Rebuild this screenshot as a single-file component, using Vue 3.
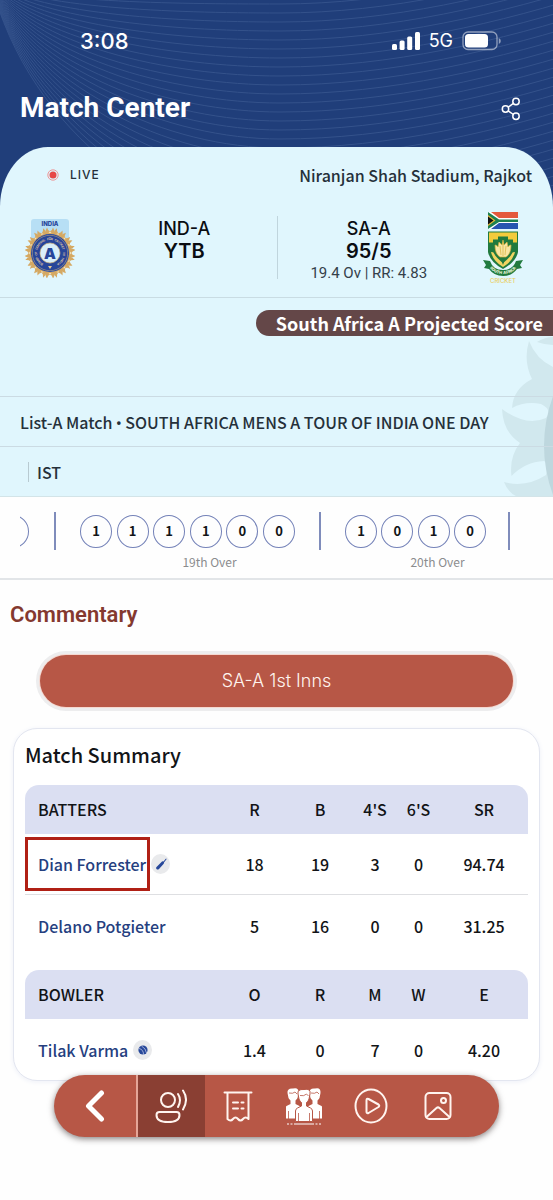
<template>
<div class="page">
    <div class="hero">
        <svg class="waves" viewBox="0 0 553 300" preserveAspectRatio="xMidYMin slice" aria-hidden="true">
            <path v-for="d in waves" :key="d" :d="d" />
        </svg>

        <header>
            <div class="status">
                <span class="time">3:08</span>
                <div class="status_right">
                    <svg width="28" height="19" viewBox="0 0 28 19" fill="#fff">
                        <rect x="0" y="12" width="5" height="6" rx="1.5" />
                        <rect x="7.6" y="8.5" width="5" height="9.500" rx="1.5" />
                        <rect x="15.2" y="4.500" width="5" height="13.500" rx="1.5" />
                        <rect x="23" y="0" width="5" height="18" rx="1.5" />
                    </svg>
                    <span class="network">5G</span>
                    <svg width="40" height="20" viewBox="0 0 40 20">
                        <rect x="1" y="1" width="34" height="17.500" rx="5" fill="none" stroke="#fff" stroke-opacity=".5" stroke-width="1.300" />
                        <rect x="3" y="3" width="23" height="13.500" rx="3.500" fill="#fff" />
                        <path d="M36.800 7v6q2-1 2-3t-2-3z" fill="#fff" fill-opacity=".5" />
                    </svg>
                </div>
            </div>
            <div class="title_row">
                <h1>Match Center</h1>
                <button class="share" type="button" aria-label="Share">
                    <svg width="20" height="24" viewBox="0 0 20 24" fill="none" stroke="#fff" stroke-width="1.500">
                        <circle cx="4.500" cy="12" r="3.200" />
                        <circle cx="15" cy="4.500" r="3.200" />
                        <circle cx="15" cy="19.300" r="3.200" />
                        <path d="M7.200 10.200l5.200-3.800M7.200 13.900l5.200 3.600" />
                    </svg>
                </button>
            </div>
        </header>

        <section class="match">
            <svg class="watermark" width="54" height="160" viewBox="499 338 54 160" aria-hidden="true">
                <path fill="#d1e8ee" d="M529 342Q536 360 553 368V500H524Q509 497 504 483Q526 489 546 476Q549 464 544 462Q525 463 511.500 477Q509 458 520 444Q503 433 502 410Q526 428 546 419Q553 411 541 405Q525 402 512 409Q513 390 532 380Q523 362 529 342zM537 343Q545 338 553 338V346Q545 346 537 343z" />
                <path fill="#bed7de" d="M553 397Q535 447 553 496z" />
            </svg>

            <div class="venue">
                <span class="live">
                    <svg width="12" height="12" viewBox="0 0 12 12"><circle cx="6" cy="6" r="5.200" fill="none" stroke="#ef7f7f" stroke-width=".8" /><circle cx="6" cy="6" r="3.500" fill="#e64646" /></svg>
                    LIVE
                </span>
                <span>Niranjan Shah Stadium, Rajkot</span>
            </div>

            <div class="score">
                <div class="logo">
                    <svg width="50" height="60" viewBox="0 0 50 60">
                        <rect x="6" y="1" width="38" height="34" rx="3" fill="#b7dff5" />
                        <text x="25" y="8" class="india">INDIA</text>
                        <g v-for="n in 16" :key="n" :transform="`rotate(${n * 22.5} 25 35)`">
                            <path d="M20.500 16.500Q20 12 22 9.500Q23 13 25 13.500Q27 13 28 9.500Q30 12 29.500 16.500z" fill="#d5a963" />
                            <path d="M23.500 15l1.500-1.500 1.500 1.500z" fill="#f3e4c0" />
                        </g>
                        <circle cx="25" cy="35" r="19" fill="#27459a" />
                        <circle cx="25" cy="35" r="17.700" fill="none" stroke="#d5b77c" stroke-width=".5" />
                        <circle cx="25" cy="35" r="10" fill="#d9eefa" stroke="#d5b77c" stroke-width=".7" />
                        <text v-for="(c, i) in motto" :key="i" x="25" y="22" class="ring_text" :transform="`rotate(${i * 8 - 144} 25 35)`">{{ c }}</text>
                        <path d="M23 48h4l-2 3z" fill="#e7c791" />
                        <text x="25" y="40.500" class="india_a">A</text>
                    </svg>
                </div>
                <div class="team">
                    <span class="team_name">IND-A</span>
                    <strong>YTB</strong>
                </div>
                <div class="team away">
                    <span class="team_name">SA-A</span>
                    <strong>95/5</strong>
                    <span class="overs_rate">19.4 Ov | RR: 4.83</span>
                </div>
                <div class="logo">
                    <svg width="42" height="74" viewBox="0 0 42 74">
                        <path d="M6 1h30v17H6z" fill="#fff" />
                        <path d="M6 1h30v6H17L9 1z" fill="#e4593d" />
                        <path d="M6 18h30v-6H17L9 18z" fill="#2754b0" />
                        <path d="M6 1l11 7.500h19v2.500H17L6 18v-4l6-4.500L6 5z" fill="#1d8050" />
                        <path d="M6 4l7.500 5.500L6 15z" fill="#e5b735" />
                        <path d="M6 5.500l5.500 4L6 13.500z" fill="#111" />
                        <path d="M6 20.500h30V41Q34 51 21 58Q8 51 6 41z" fill="#217a3e" />
                        <path d="M7 21.500h28v10h-4v-3h-5v-3H16v3h-5v3H7z" fill="#f3cb3c" />
                        <path d="M9 41q8 0 12 13 4-13 12-13-2 9-12 15Q11 50 9 41z" fill="#f0d461" />
                        <path d="M11 40q6 1 10 9 4-8 10-9-1 5-10 12-9-7-10-12z" fill="#217a3e" />
                        <path d="M13 34q2 0 3 2l1-5 3 3 1-5 1 5 3-3 1 5q1-2 3-2 0 9-5 12h-6q-5-3-5-12z" fill="#f8e6a4" stroke="#d8b33e" stroke-width=".7" />
                        <path d="M18 35l1 9M21 31v14M24 35l-1 9" stroke="#d8b33e" stroke-width=".7" />
                        <path d="M1 49l7 1q3 9 13 9t13-9l7-1-3 5 2 3-5 1q-5 7-14 7T7 58l-5-1 2-3z" fill="#217a3e" />
                        <path id="ribbon" d="M7.500 56Q11 63 21 63t13.500-7" fill="none" />
                        <text class="ribbon_text"><textPath href="#ribbon" startOffset="50%">SOUTH AFRICA</textPath></text>
                        <text x="21" y="72" class="cricket">CRICKET</text>
                    </svg>
                </div>
            </div>

            <div class="projected"><span>South Africa A Projected Score</span></div>
            <div class="line">List-A Match <i>•</i> SOUTH AFRICA MENS A TOUR OF INDIA ONE DAY</div>
            <div class="line zone"><span>IST</span></div>
        </section>
    </div>

    <section class="overs">
        <div class="tail"><span class="ball"></span></div>
        <div v-for="over in overs" :key="over.label" class="over">
            <div class="balls">
                <span v-for="(ball, i) in over.balls" :key="i" class="ball">{{ ball }}</span>
            </div>
            <small>{{ over.label }}</small>
        </div>
    </section>

    <h2>Commentary</h2>
    <button class="innings" type="button">SA-A 1st Inns</button>

    <section class="summary">
        <h3>Match Summary</h3>
        <table v-for="table in tables" :key="table.head[0]">
            <colgroup><col><col class="c_r"><col class="c_b"><col class="c_4"><col class="c_6"><col class="c_sr"></colgroup>
            <thead>
                <tr><th v-for="h in table.head" :key="h" scope="col">{{ h }}</th></tr>
            </thead>
            <tbody>
                <tr v-for="row in table.rows" :key="row.name">
                    <td>
                        <div class="player">
                            <a href="#" :class="{ marked: row.marked }">{{ row.name }}</a>
                            <span v-if="row.icon" class="badge">
                                <svg v-if="row.icon === 'bat'" width="12" height="12" viewBox="0 0 12 12"><path d="M1.500 9L7 3.500Q8 3 8.500 3.500L11 .5l.7.6L9 4.500Q9.200 5.300 8.500 6L4 11Q2.500 12 1.500 11T1.500 9z" fill="#27489a" /></svg>
                                <svg v-else width="10" height="10" viewBox="0 0 10 10"><circle cx="5" cy="5" r="4.600" fill="#27489a" /><path d="M1 3.500Q5.500 4.500 5.500 9.500M3.500 1Q8 3.500 8.500 8" fill="none" stroke="#eef" stroke-width=".6" /></svg>
                            </span>
                        </div>
                    </td>
                    <td v-for="(v, i) in row.values" :key="i">{{ v }}</td>
                </tr>
            </tbody>
        </table>
    </section>

    <nav>
        <button class="back" type="button" aria-label="Back">
            <svg width="20" height="32" viewBox="0 0 20 32"><path d="M16.500 3L3.500 16l13 13" fill="none" stroke="#fff" stroke-width="5" stroke-linecap="round" stroke-linejoin="round" /></svg>
        </button>
        <button class="active" type="button" aria-label="Commentary">
            <svg width="32" height="36" viewBox="0 0 32 36" class="stroke">
                <circle cx="13" cy="12" r="7" />
                <path d="M4.500 24h17q3 0 3 3 0 7-11.500 7T1.500 27q0-3 3-3zM23 6q4 6 0 13M28 2.500q6 9 0 19" />
            </svg>
        </button>
        <button type="button" aria-label="Scorecard">
            <svg width="30" height="32" viewBox="0 0 30 32" class="stroke">
                <path d="M1.500 2.500h27M4.500 3v26q3 3 5.500 0 2.500-3 5 0 2.500 3 5 0 2.500-3 5.500 0V3M10 12.500h5M18.500 12.500h2M10 18.500h5M18.500 18.500h2" />
            </svg>
        </button>
        <button type="button" aria-label="Squads">
            <svg width="36" height="38" viewBox="0 0 36 38">
                <g v-for="x in [7, 29]" :key="x" :transform="`translate(${x} 0)`">
                    <path d="M-5.500 6Q-6 1 0 1.500Q6 0 5.500 6L4.500 11Q3 14 0 14T-4.500 11z" fill="#fff" />
                    <path d="M-4 6q4 1 6-1l2 2" fill="none" stroke="#b75746" stroke-width=".8" />
                    <path d="M-2.500 13h5v4l4 2q1 1 1 3v9.500h-15V22q0-2 1-3l4-2z" fill="#fff" />
                    <path d="M-4.500 24v8M4.500 24v8" stroke="#b75746" stroke-width=".8" />
                </g>
                <path d="M12 7Q11 2 18 2.500 25 1 24 7l-1 5q-1 3-2.500 3.500V19l4 2q2 1 2 3v10.500h-17V24q0-2 2-3l4-2v-3.500Q14 15 13 12z" fill="#fff" stroke="#b75746" stroke-width="1" />
                <path d="M14 8.500q4 1 6.500-1.500l2 2M12.500 26v8M23.500 26v8" fill="none" stroke="#b75746" stroke-width=".8" />
                <path d="M1 37h2M4.500 37h2M8 37h20M29.500 37h2M33 37h2" stroke="#fff" stroke-width="1" />
            </svg>
        </button>
        <button type="button" aria-label="Videos">
            <svg width="34" height="36" viewBox="0 0 34 36" class="stroke">
                <ellipse cx="17" cy="18" rx="15.500" ry="16.500" />
                <path d="M12.500 12.500q0-2.500 2-1.500l10 5.500q1.500 1.200 0 2.500l-10 6q-2 .8-2-1.500z" />
            </svg>
        </button>
        <button type="button" aria-label="Photos">
            <svg width="28" height="30" viewBox="0 0 28 30" class="stroke">
                <rect x="1.500" y="2" width="25" height="26" rx="4" />
                <circle cx="19.500" cy="9.500" r="2.500" />
                <path d="M2.500 26l10-9q1.500-1.300 3 0l10 9" />
            </svg>
        </button>
    </nav>
</div>
</template>

<script setup>
// each wave falls from the top left corner, flattens at x=280 and climbs to the right
const waves = Array.from({ length: 26 }, (_, k) => {
    const y = 4 + k * 9;
    return `M-10 -20C30 ${y * 0.6} 170 ${y} 280 ${y}S500 ${y - 26} 600 ${y - 58}`;
});

const motto = 'BOARD OF CONTROL FOR CRICKET IN INDIA';

const overs = [
    { label: '19th Over', balls: [1, 1, 1, 1, 0, 0] },
    { label: '20th Over', balls: [1, 0, 1, 0] },
];

const tables = [
    {
        head: ['BATTERS', 'R', 'B', "4'S", "6'S", 'SR'],
        rows: [
            { name: 'Dian Forrester', icon: 'bat', marked: true, values: ['18', '19', '3', '0', '94.74'] },
            { name: 'Delano Potgieter', values: ['5', '16', '0', '0', '31.25'] },
        ],
    },
    {
        head: ['BOWLER', 'O', 'R', 'M', 'W', 'E'],
        rows: [
            { name: 'Tilak Varma', icon: 'ball', values: ['1.4', '0', '7', '0', '4.20'] },
        ],
    },
];
</script>

<style>
body{
    background: #fefefe;
}
</style>

<style scoped>
.page{
    min-height: 100vh;
    padding-bottom: 120px;
    box-sizing: border-box;
    font-family: "Noto Sans CJK SC", "Open Sans", sans-serif;
    font-size: 16px;
    font-weight: 500;
    line-height: 24px;
    color: #121417;
}
button{
    border: 0;
    padding: 0;
    background: none;
    font: inherit;
    color: inherit;
    cursor: pointer;
}
svg{
    display: block;
}
h1, h2, h3{
    margin: 0;
}
.hero{
    position: relative;
    overflow: hidden;
    background: #203e7a;
}
.waves{
    position: absolute;
    top: 0;
    left: 0;
    width: 100%;
    height: 300px;
    fill: none;
    stroke: #34528b;
    stroke-width: 1;
}
header{
    position: relative;
    height: 147px;
    color: #fff;
}
.status{
    display: flex;
    justify-content: space-between;
    align-items: center;
    height: 82px;
    padding: 0 51px 0 80px;
    font-family: Inter, sans-serif;
}
.time{
    font-size: 22px;
    font-weight: 500;
}
.status_right{
    display: flex;
    align-items: center;
    gap: 9px;
}
.network{
    font-size: 18px;
    font-weight: 400;
}
.title_row{
    display: flex;
    justify-content: space-between;
    align-items: center;
    height: 52px;
    padding: 0 32px 0 20px;
}
h1{
    font-family: Roboto, sans-serif;
    font-size: 28px;
    font-weight: 700;
    line-height: 36px;
}
.share{
    padding-top: 2px;
}
.match{
    position: relative;
    overflow: hidden;
    border-radius: 48px 48px 0 0 / 60px 60px 0 0;
    background: #e0f6fd;
    color: #25303a;
}
.watermark{
    position: absolute;
    right: 0;
    bottom: 0;
}
.venue{
    display: flex;
    justify-content: space-between;
    align-items: center;
    height: 56px;
    padding: 0 21px 0 47px;
}
.live{
    display: flex;
    align-items: center;
    gap: 11px;
    font-family: Inter, sans-serif;
    font-size: 12px;
    font-weight: 500;
    letter-spacing: 1px;
}
.score{
    display: grid;
    grid-template-columns: 92px 1fr 1fr 92px;
    height: 95px;
    box-sizing: border-box;
    border-bottom: 1px solid #c9dce3;
}
.logo{
    display: flex;
    justify-content: center;
    align-items: center;
    padding: 0 0 4px 7px;
}
.logo:last-child{
    padding: 0 8px 4px 0;
}
.logo svg{
    font-family: Inter, sans-serif;
    text-anchor: middle;
}
.india{
    font-size: 6px;
    font-weight: 800;
    fill: #27459a;
}
.india_a{
    font-size: 15px;
    font-weight: 900;
    fill: #27459a;
}
.ring_text{
    font-size: 3px;
    font-weight: 600;
    fill: #e8d3a6;
}
.ribbon_text{
    font-size: 4px;
    font-weight: 800;
    fill: #e8f5d8;
}
.cricket{
    font-size: 6px;
    font-weight: 500;
    fill: #e9cf65;
}
.team{
    position: relative;
    display: flex;
    flex-direction: column;
    align-items: center;
    padding-top: 15px;
    line-height: 22px;
    font-family: Inter, sans-serif;
    color: #0a0d12;
}
.team_name{
    font-size: 18px;
}
.team strong{
    font-size: 20px;
    font-weight: 600;
}
.away::before{
    content: "";
    position: absolute;
    left: 0;
    top: 13px;
    height: 63px;
    border-left: 1px solid #c0d5dd;
}
.overs_rate{
    font-family: Roboto, sans-serif;
    font-size: 15px;
    font-weight: 400;
    color: #34404a;
}
.projected{
    display: flex;
    justify-content: flex-end;
    align-items: flex-start;
    height: 98px;
    padding-top: 12px;
    box-sizing: border-box;
}
.projected span{
    padding: 0 10px 0 20px;
    border-radius: 14px 0 0 14px;
    background: #644748;
    color: #fff;
    font-size: 18px;
    font-weight: 700;
    line-height: 26px;
}
.line{
    position: relative;
    height: 50px;
    padding: 0 20px;
    border-top: 1px solid #cbdbe3;
    box-sizing: border-box;
    line-height: 50px;
}
.line i{
    font-family: Roboto, sans-serif;
    font-style: normal;
}
.zone{
    height: 51px;
    padding-left: 28px;
    border-bottom: 1px solid #d3e4e8;
}
.zone span{
    display: inline-block;
    padding-left: 8px;
    border-left: 1px solid #b8cad1;
    line-height: 20px;
}
.overs{
    display: flex;
    height: 83px;
    padding: 15px 0 0 20px;
    box-sizing: border-box;
    border-bottom: 2px solid #e2e5e8;
    overflow: hidden;
}
.tail{
    display: flex;
    justify-content: flex-end;
    width: 9px;
    padding-right: 25px;
    height: 38px;
    align-items: center;
    overflow: hidden;
}
.over{
    display: flex;
    flex-direction: column;
    flex: none;
    width: 265px;
}
.over:last-child{
    width: 191px;
}
.balls{
    display: flex;
    align-items: center;
    justify-content: space-between;
    height: 38px;
    padding: 0 24px;
    border-left: 2px solid #7f8cbb;
}
.over:last-child .balls{
    padding-right: 22px;
    border-right: 2px solid #7f8cbb;
}
.ball{
    flex: none;
    width: 32px;
    height: 33px;
    box-sizing: border-box;
    border: 1px solid #7482b8;
    border-radius: 50%;
    text-align: center;
    font-size: 13px;
    font-weight: 700;
    line-height: 29px;
}
.over small{
    padding-left: 46px;
    font-size: 12px;
    font-weight: 400;
    text-align: center;
    color: #8b8c8e;
}
h2{
    padding: 18px 10px 0;
    font-family: Roboto, sans-serif;
    font-size: 22px;
    font-weight: 600;
    line-height: 34px;
    color: #84392f;
}
.innings{
    display: block;
    width: calc(100% - 80px);
    height: 52px;
    margin: 23px 40px 0;
    border-radius: 26px;
    background: #b75746;
    box-shadow: 0 0 0 1px #f5d8d0, 0 0 0 4px #ededee;
    color: #fff4ee;
    font-family: Inter, sans-serif;
    font-size: 18px;
    font-weight: 300;
}
.summary{
    margin: 21px 13px 0;
    padding: 12px 11px 0;
    border: 1px solid #e3e6f0;
    border-radius: 24px;
    box-shadow: 0 1px 5px #eef0f8;
    background: #fff;
}
h3{
    margin-bottom: 16px;
    font-size: 20px;
    font-weight: 500;
    line-height: 28px;
}
table{
    width: 100%;
    table-layout: fixed;
    border-collapse: separate;
    border-spacing: 0;
    margin-bottom: 14px;
}
table:last-child{
    margin-bottom: 0;
}
.c_r{
    width: 65px;
}
.c_b{
    width: 66px;
}
.c_4{
    width: 44px;
}
.c_6{
    width: 43px;
}
.c_sr{
    width: 88px;
}
th{
    height: 47px;
    padding: 0 0 2px;
    background: #dbdff2;
    font-weight: 500;
}
th:first-child{
    padding-left: 13px;
    border-radius: 14px 0 0 0;
    text-align: left;
}
th:last-child{
    border-radius: 0 14px 0 0;
}
td{
    height: 61px;
    padding: 0;
    text-align: center;
}
tr:not(:last-child) td{
    height: 60px;
    border-bottom: 1px solid #dedfe2;
}
.player{
    display: flex;
    align-items: center;
    gap: 1px;
}
.player a{
    flex: none;
    padding: 12px 1px 12px 10px;
    border: 3px solid transparent;
    color: #25407f;
    text-decoration: none;
    white-space: nowrap;
}
.player a.marked{
    border-color: #b02015;
}
.badge{
    display: flex;
    justify-content: center;
    align-items: center;
    width: 19px;
    height: 20px;
    border-radius: 50%;
    background: #e9eaec;
}
nav{
    position: fixed;
    left: 54px;
    right: 54px;
    bottom: 63px;
    display: flex;
    height: 62px;
    padding-right: 28px;
    border-radius: 31px;
    overflow: hidden;
    background: #b75746;
    box-shadow: 0 2px 6px rgba(40, 30, 30, .55);
}
nav button{
    flex: 1 1 67px;
    display: flex;
    justify-content: center;
    align-items: center;
}
nav .back{
    flex: 0 0 84px;
    border-right: 2px solid #e5a698;
}
nav .active{
    background: #8a3f33;
}
.stroke{
    fill: none;
    stroke: #fff4ef;
    stroke-width: 2;
    stroke-linecap: round;
    stroke-linejoin: round;
}
</style>
